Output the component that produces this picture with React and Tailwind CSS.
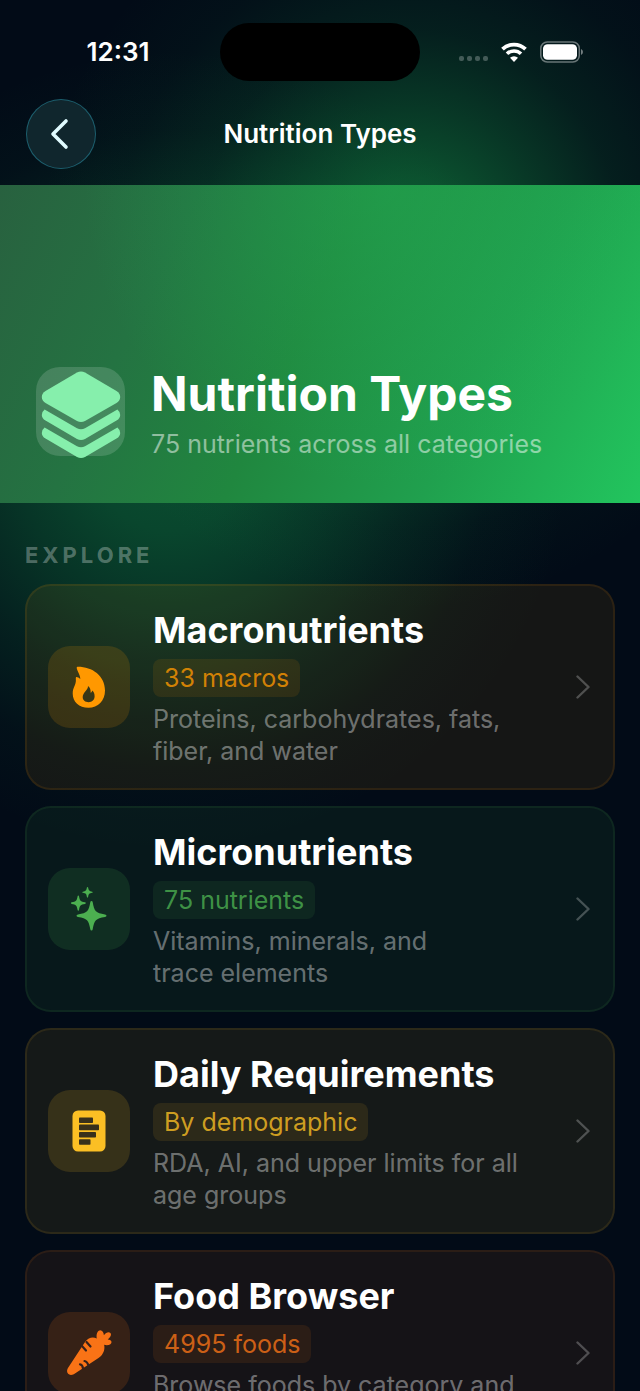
import React from 'react';

// Status bar glyphs
const WifiIcon = () => (
  <svg viewBox="0 0 28 20" className="w-7 h-5" fill="none" aria-hidden="true">
    <path d="M2.5 7.2a16.5 16.5 0 0 1 23 0" stroke="#fff" strokeWidth="3.8" />
    <path d="M7 11.8a10 10 0 0 1 14 0" stroke="#fff" strokeWidth="3.6" />
    <path d="M14 20l-4-4.2a5.8 5.8 0 0 1 8 0z" fill="#fff" />
  </svg>
);

const BatteryIcon = () => (
  <svg viewBox="0 0 44 22" className="w-11 h-[22px]" aria-hidden="true">
    <rect x="0.8" y="1" width="38.5" height="20" rx="6.5" fill="none" stroke="#fff" strokeOpacity="0.4" strokeWidth="1.5" />
    <rect x="3" y="3.2" width="34" height="15.6" rx="4.6" fill="#fff" />
    <path d="M41 8v6q2-.8 2-3t-2-3z" fill="#fff" fillOpacity="0.45" />
  </svg>
);

const StackIcon = () => (
  <svg viewBox="0 -2 80 90" className="w-20 h-[90px] shrink-0" fill="#86efac" aria-hidden="true">
    <path d="M36 1.6q4-2.2 8 0L75.5 20q3.7 2.3 3.7 6t-3.7 6L44 50q-4 2.2-8 0L4.5 32Q.8 29.7.8 26t3.7-6z" />
    <path d="M3.6 38.5L36 57.2q4 2.2 8 0L76.4 38.5q2.8 2.2 2.8 5.5 0 3.4-3.7 5.6L44 68q-4 2.2-8 0L4.5 49.6Q.8 47.4.8 44q0-3.3 2.8-5.5z" />
    <path d="M3.6 56.5L36 75.2q4 2.2 8 0L76.4 56.5q2.8 2.2 2.8 5.5 0 3.4-3.7 5.6L44 86q-4 2.2-8 0L4.5 67.6Q.8 65.4.8 62q0-3.3 2.8-5.5z" />
  </svg>
);

const FlameIcon = () => (
  <svg viewBox="0 0 34 42" className="w-[34px] h-[42px]" fill="#ff9800" fillRule="evenodd" aria-hidden="true">
    <path d="M5.5.7C20 .5 33 9.5 33 24.5 33 35 26 41.7 16.5 41.7 7 41.7.7 36 .7 27.500c0-6 3.3-8.5 3.2-13.5-.1-1.4-.1-2.6.2-3 .5-.4 3 .6 4.2 2C8.3 8.500 4.700 4.500 4.700 1.800c0-.7.3-1.1.8-1.1zM16 20c.3 4-5.300 6.500-5.300 11 0 3.200 2.500 5.200 5.900 5.200s6-2.200 6-5.900c0-2.700-1-4.600-2.300-5.700-.3 1.300-.9 2-1.700 2.200.3-2.700-.6-5.600-2.600-6.800z" />
  </svg>
);

const SparkleIcon = () => (
  <svg viewBox="0 0 36 44" className="w-9 h-11" fill="#4caf50" aria-hidden="true">
    <path d="M20.5 14q1 0 1.2 1.3c1.6 9 3 10.6 12.3 12.2q1.5.3 1.5 1.3t-1.5 1.3c-9.3 1.6-10.7 3.2-12.3 12.2q-.2 1.3-1.2 1.3t-1.2-1.3c-1.6-9-3-10.6-12.3-12.2q-1.5-.3-1.5-1.3t1.5-1.3c9.3-1.6 10.7-3.2 12.3-12.2Q19.5 14 20.5 14z" />
    <path d="M7.3 8.5q.6 0 .7.7c.8 4.6 1.5 5.4 6 6.1q.8.2.8.8t-.8.8c-4.5.7-5.2 1.5-6 6.1q-.1.7-.7.7t-.7-.7c-.8-4.6-1.5-5.4-6-6.1q-.6-.2-.6-.8t.6-.8c4.5-.7 5.2-1.5 6-6.1q.1-.7.7-.7z" />
    <path d="M16.500 0q.5 0 .6.6c.6 3 1.100 3.500 4.100 4.100q.6.1.6.5t-.6.6c-3 .5-3.500 1-4.100 4.100q-.1.6-.6.6t-.6-.6c-.5-3.100-1-3.600-4-4.100q-.6-.1-.6-.6t.6-.5c3-.6 3.500-1.100 4-4.100q.1-.6.6-.6z" />
  </svg>
);

const DocumentIcon = () => (
  <svg viewBox="0 0 34 42" className="w-[34px] h-[42px]" aria-hidden="true">
    <rect x="0.5" y="0.5" width="33" height="41" rx="5.5" fill="#fbbf24" />
    <g fill="#38301b">
      <rect x="7" y="7.5" width="14" height="5.5" rx="0.8" />
      <rect x="7" y="14.6" width="20" height="5.6" rx="0.8" />
      <rect x="7" y="22" width="17" height="5.5" rx="0.8" />
      <rect x="7" y="29.3" width="11.5" height="5.5" rx="0.8" />
    </g>
  </svg>
);

const CarrotIcon = () => (
  <svg viewBox="0 0 46 46" className="w-[46px] h-[46px]" aria-hidden="true">
    <path d="M30.8 8.6C27 6.3 22.5 7.5 19.5 11.3L1.800 38.200C-.6 43 3 46.500 7.800 44.200L32.500 28c4.600-3 6.800-8.400 5.600-13.200 2.800 1 7.300.4 7.400-2.600.1-1.800-1.600-2.700-3.800-2.800 2.600-2 4.200-4.900 2.700-6.500-1.700-1.700-4.600-.4-6.500 2.400C37.700 2.500 36.300.3 34.300.3c-2.700 0-4.400 4.300-3.500 8.300z" fill="#f97316" />
    <g stroke="#38211b" strokeWidth="2.2" fill="none" strokeLinecap="round">
      <path d="M16 16l4 4.500M20.500 12l4 4.500" />
      <path d="M14 34.300q2.500.2 3 4.200M18.500 31q2.500.2 4 4.300" />
    </g>
  </svg>
);

const cards = [
  {
    title: 'Macronutrients',
    badge: '33 macros',
    description: 'Proteins, carbohydrates, fats,\nfiber, and water',
    icon: <FlameIcon />,
    card: 'bg-[#ff9800]/8 border-[#ff9800]/10',
    tile: 'bg-[#ff9800]/15',
    label: 'bg-[#ff9800]/10 text-[#ff9800]/80',
  },
  {
    title: 'Micronutrients',
    badge: '75 nutrients',
    description: 'Vitamins, minerals, and\ntrace elements',
    icon: <SparkleIcon />,
    card: 'bg-[#4caf50]/8 border-[#4caf50]/10',
    tile: 'bg-[#4caf50]/15',
    label: 'bg-[#4caf50]/10 text-[#4caf50]/80',
  },
  {
    title: 'Daily Requirements',
    badge: 'By demographic',
    description: 'RDA, AI, and upper limits for all\nage groups',
    icon: <DocumentIcon />,
    card: 'bg-[#fbbf24]/8 border-[#fbbf24]/10',
    tile: 'bg-[#fbbf24]/15',
    label: 'bg-[#fbbf24]/10 text-[#fbbf24]/80',
  },
  {
    title: 'Food Browser',
    badge: '4995 foods',
    description: 'Browse foods by category and\nnutrient content',
    icon: <CarrotIcon />,
    card: 'bg-[#f97316]/8 border-[#f97316]/10',
    tile: 'bg-[#f97316]/15',
    label: 'bg-[#f97316]/10 text-[#f97316]/80',
  },
];

const StatusBar = () => (
  <div className="grid grid-cols-[1fr_200px_1fr] items-center pt-[23px]">
    <span className="pl-4 text-center text-[26px] leading-8 font-semibold">12:31</span>
    <div className="h-[58px] rounded-full bg-black" />
    <div className="flex items-center justify-end gap-3 pr-14">
      <div className="flex gap-[3px] pt-3">
        <span className="size-[5px] rounded-[2px] bg-white/25" />
        <span className="size-[5px] rounded-[2px] bg-white/25" />
        <span className="size-[5px] rounded-[2px] bg-white/25" />
        <span className="size-[5px] rounded-[2px] bg-white/25" />
      </div>
      <WifiIcon />
      <BatteryIcon />
    </div>
  </div>
);

const CategoryCard = ({ item }) => (
  <a href="#" className={`flex items-center rounded-[26px] border-2 p-[21px] pr-[23px] ${item.card}`}>
    <div className={`flex size-[82px] shrink-0 items-center justify-center rounded-[22px] ${item.tile}`}>
      {item.icon}
    </div>
    <div className="ml-[23px] flex min-w-0 flex-1 flex-col items-start gap-[6px]">
      <h3 className="text-[36px] leading-[46px] font-bold">{item.title}</h3>
      <span className={`rounded-lg px-[11px] text-[25px] leading-[38px] ${item.label}`}>{item.badge}</span>
      <p className="text-[25px] leading-8 whitespace-pre-line text-white/40">{item.description}</p>
    </div>
    <svg viewBox="0 0 14 24" className="w-[14px] h-6 shrink-0" fill="none" aria-hidden="true">
      <path d="M1.5 1.5L12.5 12 1.5 22.5" stroke="#fff" strokeOpacity="0.25" strokeWidth="2.4" strokeLinecap="round" strokeLinejoin="round" />
    </svg>
  </a>
);

const App = () => {
  return (
    <div className="h-screen overflow-hidden bg-[#020b17] bg-[radial-gradient(circle_at_410px_240px,rgba(22,163,74,0.52)_0px,rgba(22,163,74,0.46)_60px,rgba(22,163,74,0.28)_140px,rgba(22,163,74,0.13)_210px,rgba(22,163,74,0.04)_290px,rgba(22,163,74,0)_370px),radial-gradient(circle_at_170px_450px,rgba(20,163,80,0.44)_0px,rgba(20,163,80,0.39)_80px,rgba(20,163,80,0.27)_160px,rgba(20,163,80,0.14)_240px,rgba(20,163,80,0.04)_320px,rgba(20,163,80,0)_400px)] font-['Inter',sans-serif] text-white">
      <StatusBar />

      <header className="grid grid-cols-[70px_1fr_70px] items-center px-[26px] pt-[18px] pb-4">
        <button
          type="button"
          aria-label="Back"
          className="flex size-[70px] items-center justify-center rounded-full border border-[#22778a]/70 bg-[#10262d]"
        >
          <svg viewBox="0 0 20 32" className="mr-1 h-8 w-5" fill="none" aria-hidden="true">
            <path d="M17 3L4 16l13 13" stroke="#e0fbff" strokeWidth="3.6" strokeLinecap="round" strokeLinejoin="round" />
          </svg>
        </button>
        <h1 className="text-center text-[26px] leading-8 font-semibold">Nutrition Types</h1>
      </header>

      <section className="flex h-[318px] items-end bg-[radial-gradient(circle_at_60%_0%,rgba(34,175,85,0.45),rgba(34,175,85,0)_300px),linear-gradient(115deg,#28613f_0%,#247342_25%,#20873f_47%,#20a04e_72%,#22c55e_100%)] px-9 pb-[39px]">
        <div className="flex items-end gap-[26px]">
          <div className="mb-2 flex size-[89px] shrink-0 items-center justify-center rounded-3xl bg-white/15 pt-1">
            <StackIcon />
          </div>
          <div>
            <h2 className="text-[48px] leading-[60px] font-bold">Nutrition Types</h2>
            <p className="text-[25px] leading-10 text-white/50">75 nutrients across all categories</p>
          </div>
        </div>
      </section>

      <main className="px-[25px] pt-9">
        <h2 className="text-[22px] leading-8 font-bold tracking-[4px] text-white/30">EXPLORE</h2>
        <div className="mt-[13px] flex flex-col gap-4">
          {cards.map((item) => (
            <CategoryCard key={item.title} item={item} />
          ))}
        </div>
      </main>
    </div>
  );
};

export default App;
